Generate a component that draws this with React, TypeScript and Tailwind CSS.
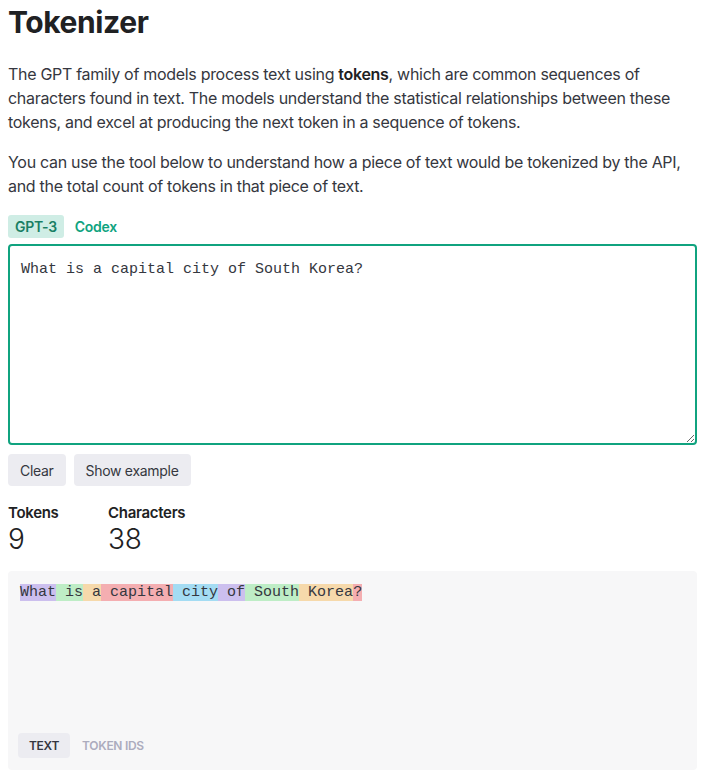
import { useState } from "react"

const TOKENS = ["What", " is", " a", " capital", " city", " of", " South", " Korea", "?"]
const COLORS = [
  "bg-[rgba(107,64,216,0.3)]",
  "bg-[rgba(104,222,122,0.4)]",
  "bg-[rgba(244,172,54,0.4)]",
  "bg-[rgba(239,65,70,0.4)]",
  "bg-[rgba(39,181,234,0.4)]",
]

export default function App() {
  const [text, setText] = useState("What is a capital city of South Korea?")
  const [model, setModel] = useState("gpt3")
  const [view, setView] = useState("text")

  return (
    <div className="min-h-screen bg-white px-2 text-[#353740] font-['Inter',sans-serif] tracking-[-0.3px]">
      <div className="w-[689px]">
        <h1 className="pt-[2px] text-[30px] leading-10 font-bold text-[#202123] tracking-[-0.4px]">Tokenizer</h1>

        <p className="mt-[20px] text-[16px] leading-6">
          The GPT family of models process text using <strong className="font-semibold text-[#202123]">tokens</strong>, which are common sequences of
          characters found in text. The models understand the statistical relationships between these
          tokens, and excel at producing the next token in a sequence of tokens.
        </p>
        <p className="mt-4 text-[16px] leading-6">
          You can use the tool below to understand how a piece of text would be tokenized by the API,
          and the total count of tokens in that piece of text.
        </p>

        <div className="mt-[17px] flex gap-1 text-[14px] font-semibold">
          <button
            onClick={() => setModel("gpt3")}
            className={`rounded-[3px] px-[7px] h-[23px] ${model === "gpt3" ? "bg-[rgba(16,163,127,0.2)] text-[#1a7f64]" : "text-[#10a37f]"}`}
          >
            GPT-3
          </button>
          <button
            onClick={() => setModel("codex")}
            className={`rounded-[3px] px-[7px] h-[23px] ${model === "codex" ? "bg-[rgba(16,163,127,0.2)] text-[#1a7f64]" : "text-[#10a37f]"}`}
          >
            Codex
          </button>
        </div>

        <textarea
          value={text}
          onChange={(e) => setText(e.target.value)}
          className="mt-[6px] block h-[201px] w-full rounded-[4px] border-2 border-[#10a37f] px-[11px] pt-[14px] pb-[12px] text-[15px] leading-5 tracking-normal text-[#353740] outline-none font-['Liberation_Mono',monospace] resize-y"
        />

        <div className="mt-[9px] flex gap-2 text-[14px]">
          <button onClick={() => setText("")} className="h-[32px] rounded-[4px] bg-[#ececf1] px-3 text-[#353740]">Clear</button>
          <button className="h-[32px] rounded-[4px] bg-[#ececf1] px-3 text-[#353740]">Show example</button>
        </div>

        <div className="mt-[17px] flex gap-12">
          <div className="w-[52px]">
            <div className="text-[15px] font-semibold leading-5 text-[#202123]">Tokens</div>
            <div className="text-[28px] leading-8 font-light text-[#202123]">9</div>
          </div>
          <div>
            <div className="text-[15px] font-semibold leading-5 text-[#202123]">Characters</div>
            <div className="text-[28px] leading-8 font-light text-[#202123]">{text.length}</div>
          </div>
        </div>

        <div className="mt-[16px] flex h-[199px] flex-col rounded-[4px] bg-[#f7f7f8] px-[10px] pt-[12px] pb-[12px]">
          <div className="ml-[2px] flex-1 text-[15px] leading-5 tracking-normal whitespace-pre font-['Liberation_Mono',monospace] text-[#353740]">
            {view === "text"
              ? TOKENS.map((t, i) => (
                  <span key={i} className={COLORS[i % COLORS.length]}>{t}</span>
                ))
              : "2061, 318, 257, 3139, 1748, 286, 2520, 4969, 30"}
          </div>
          <div className="flex gap-1 text-[12px] font-semibold">
            <button
              onClick={() => setView("text")}
              className={`h-[25px] rounded-[4px] px-[11px] ${view === "text" ? "bg-[#ececf1] text-[#353740]" : "text-[#acacbe]"}`}
            >
              TEXT
            </button>
            <button
              onClick={() => setView("ids")}
              className={`h-[25px] rounded-[4px] px-2 ${view === "ids" ? "bg-[#ececf1] text-[#353740]" : "text-[#acacbe]"}`}
            >
              TOKEN IDS
            </button>
          </div>
        </div>
      </div>
    </div>
  )
}
